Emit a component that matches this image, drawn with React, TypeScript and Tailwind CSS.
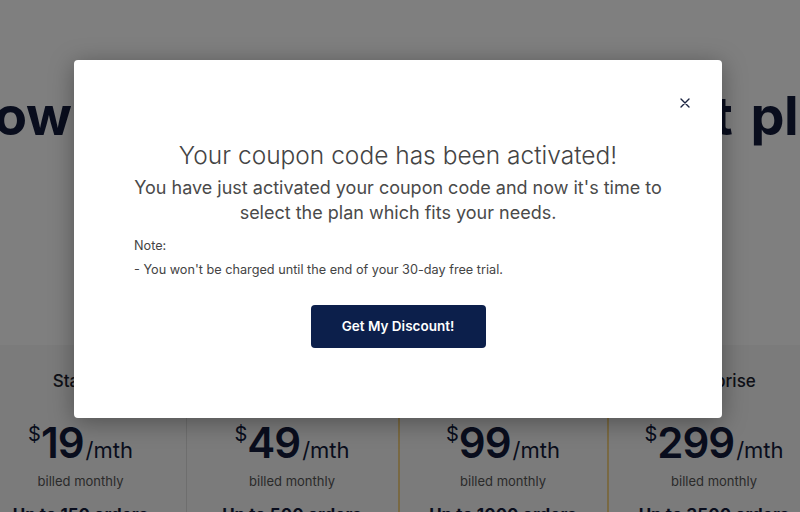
import React from "react";

const plans = [
  { name: "Starter", price: "19", orders: "Up to 150 orders", border: "border-r border-[#dddddd]" },
  { name: "Growth", price: "49", orders: "Up to 500 orders", border: "" },
  { name: "Pro", price: "99", orders: "Up to 1000 orders", border: "border-x-2 border-[#f2d386]" },
  { name: "Enterprise", price: "299", orders: "Up to 3500 orders", border: "" },
];

export default function App() {
  return (
    <div
      className="relative w-[800px] h-[512px] overflow-hidden bg-white"
      style={{ fontFamily: "Inter, 'Noto Sans', sans-serif" }}
    >
      {/* Underlying page */}
      <div className="flex flex-col h-full">
        <div className="flex justify-center pt-[84px] pr-[4px] h-[345px] shrink-0">
          <h1 className="whitespace-nowrap text-[54px] leading-[64px] font-bold tracking-[-0.5px] [word-spacing:6px] text-[#121b3a]">
            Grow your store with the right plan
          </h1>
        </div>
        <div className="flex justify-center bg-[#f6f6f6] flex-1">
          <div className="flex shrink-0 w-[849px]">
            {plans.map((p) => (
              <div key={p.name} className={`w-[211px] shrink-0 flex flex-col items-center pt-[24px] ${p.border}`}>
                <div className="text-[17px] leading-[24px] font-medium text-[#1c1f2e]">{p.name}</div>
                <div className="mt-[29px] flex items-baseline text-[#121b3a]">
                  <span className="text-[20px] self-start mt-[2px] leading-none">$</span>
                  <span className="text-[42px] leading-none font-semibold tracking-[-1px]">{p.price}</span>
                  <span className="text-[22px] leading-none ml-[2px]">/mth</span>
                </div>
                <div className="mt-[8px] text-[13px] leading-[18px] text-[#555]">billed monthly</div>
                <div className="mt-[14px] text-[17px] leading-[22px] font-bold text-[#121b3a]">{p.orders}</div>
              </div>
            ))}
          </div>
        </div>
      </div>

      {/* Overlay */}
      <div className="absolute inset-0 bg-black/50" />

      {/* Modal */}
      <div className="absolute left-[74px] top-[60px] w-[648px] h-[358px] bg-white rounded-[4px] shadow-[0_4px_24px_rgba(0,0,0,0.35)]">
        <button className="absolute right-[31px] top-[37px] w-[12px] h-[12px] flex items-center justify-center">
          <svg width="10" height="10" viewBox="0 0 10 10">
            <path d="M1 1 L9 9 M9 1 L1 9" stroke="#1a2340" strokeWidth="1.4" strokeLinecap="round" />
          </svg>
        </button>
        <div className="flex flex-col px-[60px] pt-[79px]">
          <h2 className="text-center text-[24.5px] leading-[32px] font-light text-[#444]">
            Your coupon code has been activated!
          </h2>
          <p className="mt-[4px] text-center text-[18px] leading-[25px] text-[#4a4a4a]">
            You have just activated your coupon code and now it's time to
            <br />
            select the plan which fits your needs.
          </p>
          <p className="mt-[11px] text-[12.7px] leading-[20px] text-[#444]">Note:</p>
          <p className="mt-[4px] text-[12.7px] leading-[20px] text-[#444]">
            - You won't be charged until the end of your 30-day free trial.
          </p>
          <div className="mt-[25px] flex justify-center">
            <button className="w-[175px] h-[43px] rounded-[4px] bg-[#0c1f4b] text-white text-[13.5px] font-semibold">
              Get My Discount!
            </button>
          </div>
        </div>
      </div>
    </div>
  );
}
